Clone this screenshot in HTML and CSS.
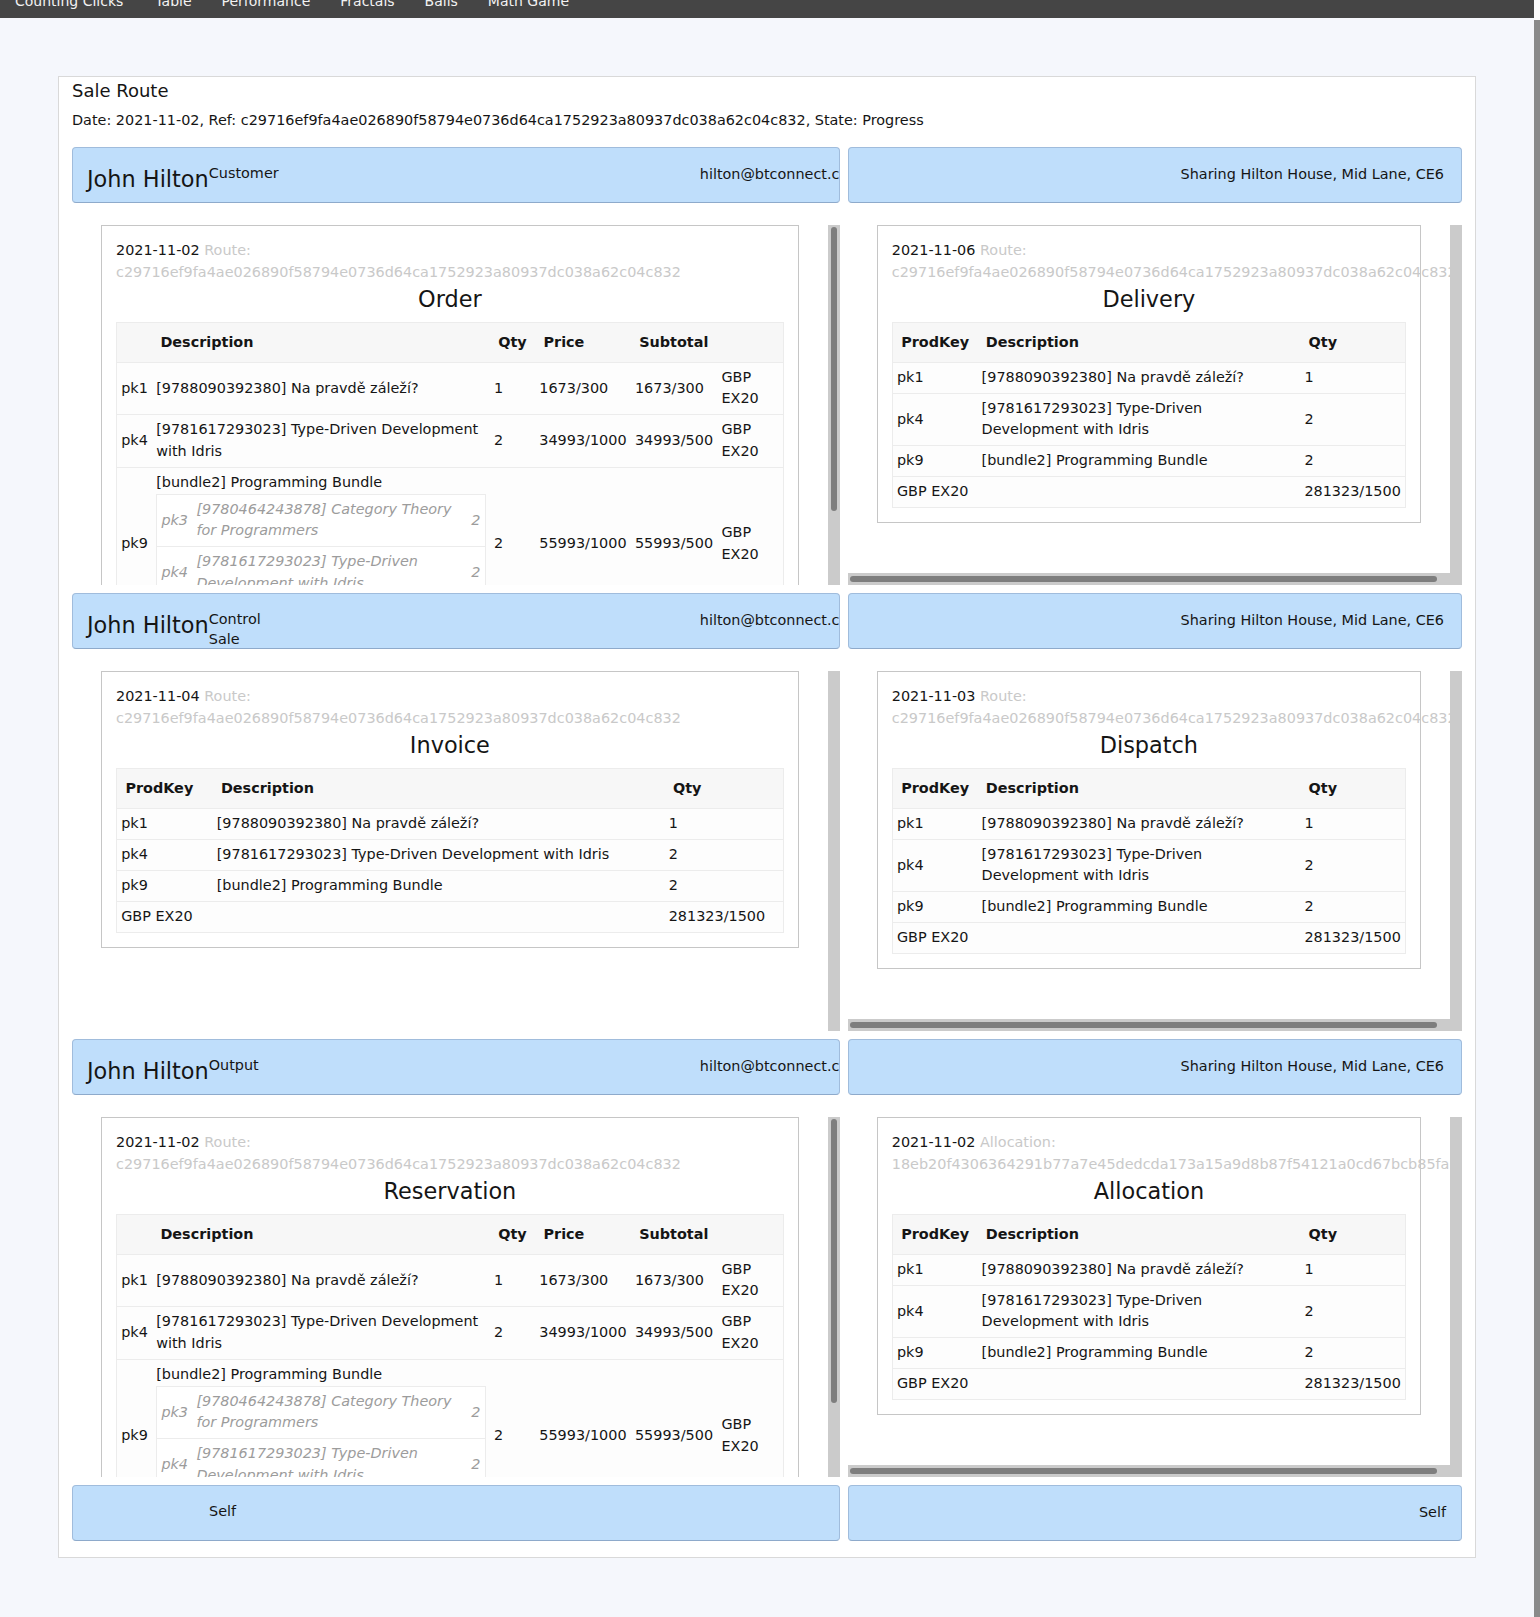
FILE: index.html
```html
<!DOCTYPE html>
<html lang="en">
<head>
<meta charset="utf-8">
<title>Sale Route</title>
<link rel="stylesheet" href="styles.css">
</head>
<body>
<nav class="navbar">
  <a class="nav-link" href="#">Counting Clicks</a>
  <a class="nav-link" href="#">Table</a>
  <a class="nav-link" href="#">Performance</a>
  <a class="nav-link" href="#">Fractals</a>
  <a class="nav-link" href="#">Balls</a>
  <a class="nav-link" href="#">Math Game</a>
</nav>
<main class="page">
  <section class="card">
    <h1 class="card-title">Sale Route</h1>
    <p class="card-meta">Date: 2021-11-02, Ref: c29716ef9fa4ae026890f58794e0736d64ca1752923a80937dc038a62c04c832, State: Progress</p>
    <div class="route-grid">

      <div class="party">
        <span class="party-name">John Hilton</span><span class="party-role">Customer</span>
        <span class="party-email">hilton@btconnect.com</span>
      </div>
      <div class="party party-end">
        <span class="party-address">Sharing Hilton House, Mid Lane, CE6</span>
      </div>

      <div class="pane">
        <div class="pane-view">
          <div class="doc">
            <div class="doc-meta"><span class="doc-date">2021-11-02</span> <span class="doc-ref">Route: c29716ef9fa4ae026890f58794e0736d64ca1752923a80937dc038a62c04c832</span></div>
            <h2 class="doc-title">Order</h2>
            <table class="lines lines-priced">
              <thead><tr><th></th><th>Description</th><th>Qty</th><th>Price</th><th>Subtotal</th><th></th></tr></thead>
              <tbody>
                <tr><td>pk1</td><td>[9788090392380] Na pravdě záleží?</td><td>1</td><td>1673/300</td><td>1673/300</td><td>GBP EX20</td></tr>
                <tr><td>pk4</td><td>[9781617293023] Type-Driven Development with Idris</td><td>2</td><td>34993/1000</td><td>34993/500</td><td>GBP EX20</td></tr>
                <tr><td>pk9</td><td>[bundle2] Programming Bundle
                  <table class="bundle">
                    <tr><td>pk3</td><td>[9780464243878] Category Theory for Programmers</td><td>2</td></tr>
                    <tr><td>pk4</td><td>[9781617293023] Type-Driven Development with Idris</td><td>2</td></tr>
                  </table></td><td>2</td><td>55993/1000</td><td>55993/500</td><td>GBP EX20</td></tr>
                <tr><td colspan="2">GBP EX20</td><td colspan="2"></td><td colspan="2">281323/1500</td></tr>
              </tbody>
            </table>
          </div>
        </div>
        <div class="vbar"><div class="vthumb"></div></div>
      </div>
      <div class="pane pane-x">
        <div class="pane-view">
          <div class="doc">
            <div class="doc-meta"><span class="doc-date">2021-11-06</span> <span class="doc-ref">Route: c29716ef9fa4ae026890f58794e0736d64ca1752923a80937dc038a62c04c832</span></div>
            <h2 class="doc-title">Delivery</h2>
            <table class="lines">
              <thead><tr><th>ProdKey</th><th>Description</th><th>Qty</th></tr></thead>
              <tbody>
                <tr><td>pk1</td><td>[9788090392380] Na pravdě záleží?</td><td>1</td></tr>
                <tr><td>pk4</td><td>[9781617293023] Type-Driven Development with Idris</td><td>2</td></tr>
                <tr><td>pk9</td><td>[bundle2] Programming Bundle</td><td>2</td></tr>
                <tr><td>GBP EX20</td><td></td><td>281323/1500</td></tr>
              </tbody>
            </table>
          </div>
        </div>
        <div class="vbar"></div>
        <div class="hbar"><div class="hthumb"></div></div>
      </div>

      <div class="party">
        <span class="party-name">John Hilton</span><span class="party-role">Control Sale</span>
        <span class="party-email">hilton@btconnect.com</span>
      </div>
      <div class="party party-end">
        <span class="party-address">Sharing Hilton House, Mid Lane, CE6</span>
      </div>

      <div class="pane">
        <div class="pane-view">
          <div class="doc">
            <div class="doc-meta"><span class="doc-date">2021-11-04</span> <span class="doc-ref">Route: c29716ef9fa4ae026890f58794e0736d64ca1752923a80937dc038a62c04c832</span></div>
            <h2 class="doc-title">Invoice</h2>
            <table class="lines">
              <thead><tr><th>ProdKey</th><th>Description</th><th>Qty</th></tr></thead>
              <tbody>
                <tr><td>pk1</td><td>[9788090392380] Na pravdě záleží?</td><td>1</td></tr>
                <tr><td>pk4</td><td>[9781617293023] Type-Driven Development with Idris</td><td>2</td></tr>
                <tr><td>pk9</td><td>[bundle2] Programming Bundle</td><td>2</td></tr>
                <tr><td>GBP EX20</td><td></td><td>281323/1500</td></tr>
              </tbody>
            </table>
          </div>
        </div>
        <div class="vbar"></div>
      </div>
      <div class="pane pane-x">
        <div class="pane-view">
          <div class="doc">
            <div class="doc-meta"><span class="doc-date">2021-11-03</span> <span class="doc-ref">Route: c29716ef9fa4ae026890f58794e0736d64ca1752923a80937dc038a62c04c832</span></div>
            <h2 class="doc-title">Dispatch</h2>
            <table class="lines">
              <thead><tr><th>ProdKey</th><th>Description</th><th>Qty</th></tr></thead>
              <tbody>
                <tr><td>pk1</td><td>[9788090392380] Na pravdě záleží?</td><td>1</td></tr>
                <tr><td>pk4</td><td>[9781617293023] Type-Driven Development with Idris</td><td>2</td></tr>
                <tr><td>pk9</td><td>[bundle2] Programming Bundle</td><td>2</td></tr>
                <tr><td>GBP EX20</td><td></td><td>281323/1500</td></tr>
              </tbody>
            </table>
          </div>
        </div>
        <div class="vbar"></div>
        <div class="hbar"><div class="hthumb"></div></div>
      </div>

      <div class="party">
        <span class="party-name">John Hilton</span><span class="party-role">Output</span>
        <span class="party-email">hilton@btconnect.com</span>
      </div>
      <div class="party party-end">
        <span class="party-address">Sharing Hilton House, Mid Lane, CE6</span>
      </div>

      <div class="pane">
        <div class="pane-view">
          <div class="doc">
            <div class="doc-meta"><span class="doc-date">2021-11-02</span> <span class="doc-ref">Route: c29716ef9fa4ae026890f58794e0736d64ca1752923a80937dc038a62c04c832</span></div>
            <h2 class="doc-title">Reservation</h2>
            <table class="lines lines-priced">
              <thead><tr><th></th><th>Description</th><th>Qty</th><th>Price</th><th>Subtotal</th><th></th></tr></thead>
              <tbody>
                <tr><td>pk1</td><td>[9788090392380] Na pravdě záleží?</td><td>1</td><td>1673/300</td><td>1673/300</td><td>GBP EX20</td></tr>
                <tr><td>pk4</td><td>[9781617293023] Type-Driven Development with Idris</td><td>2</td><td>34993/1000</td><td>34993/500</td><td>GBP EX20</td></tr>
                <tr><td>pk9</td><td>[bundle2] Programming Bundle
                  <table class="bundle">
                    <tr><td>pk3</td><td>[9780464243878] Category Theory for Programmers</td><td>2</td></tr>
                    <tr><td>pk4</td><td>[9781617293023] Type-Driven Development with Idris</td><td>2</td></tr>
                  </table></td><td>2</td><td>55993/1000</td><td>55993/500</td><td>GBP EX20</td></tr>
                <tr><td colspan="2">GBP EX20</td><td colspan="2"></td><td colspan="2">281323/1500</td></tr>
              </tbody>
            </table>
          </div>
        </div>
        <div class="vbar"><div class="vthumb"></div></div>
      </div>
      <div class="pane pane-x">
        <div class="pane-view">
          <div class="doc">
            <div class="doc-meta"><span class="doc-date">2021-11-02</span> <span class="doc-ref">Allocation: 18eb20f4306364291b77a7e45dedcda173a15a9d8b87f54121a0cd67bcb85fa1</span></div>
            <h2 class="doc-title">Allocation</h2>
            <table class="lines">
              <thead><tr><th>ProdKey</th><th>Description</th><th>Qty</th></tr></thead>
              <tbody>
                <tr><td>pk1</td><td>[9788090392380] Na pravdě záleží?</td><td>1</td></tr>
                <tr><td>pk4</td><td>[9781617293023] Type-Driven Development with Idris</td><td>2</td></tr>
                <tr><td>pk9</td><td>[bundle2] Programming Bundle</td><td>2</td></tr>
                <tr><td>GBP EX20</td><td></td><td>281323/1500</td></tr>
              </tbody>
            </table>
          </div>
        </div>
        <div class="vbar"></div>
        <div class="hbar"><div class="hthumb"></div></div>
      </div>

      <div class="party">
        <span class="party-role party-role-self">Self</span>
      </div>
      <div class="party party-end party-self-end">
        <span class="party-address">Self</span>
      </div>

    </div>
  </section>
</main>
<div class="viewport-bar"><div class="viewport-thumb"></div></div>
<script src="script.js"></script>
</body>
</html>
```

FILE: styles.css
```css
* {
  box-sizing: border-box;
}

html {
  background: #f5f7fc;
}

body {
  margin: 0 6px 0 0;
  font-family: "DejaVu Sans", "Noto Sans", sans-serif;
  font-size: 14.4px;
  line-height: 1.5;
  color: #151515;
  background: #f5f7fc;
}

/* page scrollbar strip at the right edge of the window */
.viewport-bar {
  position: fixed;
  top: 0;
  right: 0;
  width: 6px;
  height: 100vh;
  background: #fafafa;
  display: flex;
  flex-direction: column;
}

.viewport-thumb {
  margin-top: 20px;
  flex: 1;
  background: #8a8a8a;
}

/* top navigation */
.navbar {
  height: 40px;
  background: #454545;
  display: flex;
  align-items: center;
  padding-top: 6px;
  font-size: 14px;
}

.nav-link {
  color: #f2f2f2;
  text-decoration: none;
  padding: 0 15px;
  line-height: 20px;
}

.nav-link:first-child {
  margin-right: 2px;
}

/* page + card */
.page {
  padding: 58px 58px 59px;
}

.card {
  background: #ffffff;
  border: 1px solid #d9d9d9;
  padding: 0 13px 16px;
}

.card-title {
  margin: 0;
  font-size: 18px;
  line-height: 27px;
  font-weight: normal;
}

.card-meta {
  margin: 6px 0 15.5px;
  line-height: 21.6px;
}

.route-grid {
  display: grid;
  grid-template-columns: minmax(0, 5fr) minmax(0, 4fr);
  gap: 8px;
}

/* party header boxes */
.party {
  height: 56px;
  display: flex;
  align-items: flex-start;
  padding: 15px 17px 0 14px;
  background: #bfdefb;
  border: 1px solid #a0bcdc;
  border-bottom-color: #8eaacb;
  border-radius: 4px;
  overflow: hidden;
}

.party-end {
  justify-content: flex-end;
}

.party-self-end {
  padding-right: 15px;
}

.party-name {
  font-size: 22.4px;
  line-height: 28px;
  margin-top: 2px;
  white-space: nowrap;
}

.party-role {
  line-height: 19.6px;
  margin-top: 1px;
  max-width: 74px;
}

.party-role-self {
  margin-left: 122px;
}

.party-email {
  margin-left: auto;
  flex: 0 0 122px;
  min-width: 0;
  line-height: 20px;
  margin-top: 1px;
  white-space: nowrap;
}

.party-address {
  line-height: 20px;
  margin-top: 1px;
  white-space: nowrap;
}

/* document panes with their scroll tracks */
.pane {
  margin-top: 14px;
  height: 360px;
  display: grid;
  grid-template-columns: minmax(0, 1fr) 12px;
  grid-template-rows: minmax(0, 1fr);
}

.pane-x {
  grid-template-rows: minmax(0, 1fr) 12px;
}

.pane-view {
  grid-column: 1;
  grid-row: 1;
  overflow: hidden;
}

.vbar {
  grid-column: 2;
  grid-row: 1 / -1;
  background: #cbcbcb;
}

.vthumb {
  margin: 2px 3px 0;
  height: 284px;
  background: #7e7e7e;
  border-radius: 3px;
}

.hbar {
  grid-column: 1;
  grid-row: 2;
  background: #cbcbcb;
}

.hthumb {
  margin: 3px 0 0 2px;
  width: calc(100% - 15px);
  height: 6px;
  background: #7e7e7e;
  border-radius: 3px;
}

.doc {
  margin: 0 29px 28px;
  border: 1px solid #c6c6c6;
  padding: 14px;
  background: #ffffff;
}

.doc-meta {
  line-height: 21.6px;
}

.doc-ref {
  color: #c9c9c9;
}

.doc-title {
  margin: 0 0 7px;
  text-align: center;
  font-size: 22.4px;
  line-height: 32px;
  font-weight: normal;
}

/* line tables */
.lines {
  width: 100%;
  border-collapse: collapse;
  border: 1px solid #ececec;
}

.lines th {
  text-align: left;
  background: #f7f7f7;
  padding: 8.4px;
  line-height: 21.6px;
  font-weight: bold;
}

.lines td {
  padding: 4.2px;
  line-height: 21.6px;
  border-top: 1px solid #ececec;
  background: #fdfdfd;
  vertical-align: middle;
}

.lines-priced > tbody > tr > td:last-child {
  padding-right: 6.3px;
}

.bundle {
  width: 100%;
  margin-bottom: 16px;
  border-collapse: collapse;
  border: 1px solid #ececec;
  color: #9c9c9c;
  font-style: italic;
}

.bundle td {
  padding: 4.2px;
  background: #ffffff;
  border-top: 1px solid #ececec;
}
```

FILE: script.js
```js
window.scrollTo(0, document.documentElement.scrollHeight);
window.addEventListener('load', function () {
  window.scrollTo(0, document.documentElement.scrollHeight);
});
```
